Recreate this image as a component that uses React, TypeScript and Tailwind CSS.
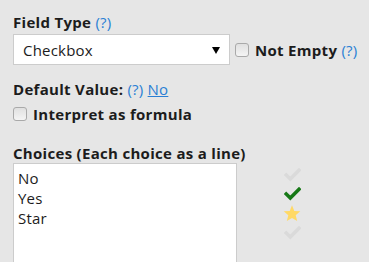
const Check = ({ color }: { color: string }) => (
  <svg width="17" height="14" viewBox="0 0 17 14" fill="none">
    <path d="M2.2 7 L6.3 11 L15 2.3" stroke={color} strokeWidth="3.6" strokeLinecap="square" strokeLinejoin="miter" />
  </svg>
)

const Star = () => (
  <svg width="18" height="17" viewBox="0 0 24 23">
    <path d="M12 0.5 L15.1 8 L23.2 8.6 L17 13.8 L19 21.8 L12 17.5 L5 21.8 L7 13.8 L0.8 8.6 L8.9 8 Z" fill="#ffd966" />
  </svg>
)

const Box = () => (
  <span className="inline-block h-[14px] w-[14px] shrink-0 rounded-[3px] border border-[#a9a9a9] bg-gradient-to-b from-[#e0e0e0] to-[#f4f4f4]" />
)

const Help = () => <span className="font-normal tracking-[0.2px] text-[#2a7fd4]">(?)</span>

export default function App() {
  const icons = ['off', 'on', 'star', 'off']
  return (
    <div
      className="h-[262px] w-[369px] overflow-hidden bg-[#e6e6e6] pl-[13px] pt-[12px] text-[15px] leading-[20px] tracking-[0.2px] text-[#1c1c1c]"
      style={{ fontFamily: '"Open Sans", sans-serif' }}
    >
      <div className="font-bold tracking-[0.3px]">
        Field Type <Help />
      </div>
      <div className="mt-[2px] flex items-center">
        <div className="flex h-[31px] w-[217px] items-center justify-between border border-[#cccccc] bg-white pl-[9px] pr-[9px]">
          <span>Checkbox</span>
          <span className="mt-[1px] h-0 w-0 border-x-[4px] border-t-[7px] border-x-transparent border-t-black" />
        </div>
        <div className="ml-[5px] flex items-center">
          <Box />
          <span className="ml-[6px] font-bold tracking-[0.3px]">
            Not Empty <Help />
          </span>
        </div>
      </div>
      <div className="mt-[14px] font-bold tracking-[0.3px]">
        Default Value: <Help />{' '}
        <span className="font-normal tracking-[0.2px] text-[#2a7fd4] underline">No</span>
      </div>
      <div className="mt-[5px] flex items-center font-bold tracking-[0.3px]">
        <Box />
        <span className="ml-[6px]">Interpret as formula</span>
      </div>
      <div className="mt-[19px] font-bold tracking-[0.3px]">Choices (Each choice as a line)</div>
      <div className="flex">
        <div className="h-[110px] w-[224px] border border-[#cccccc] bg-white px-[4px] pt-[4px]">
          <div>No</div>
          <div>Yes</div>
          <div>Star</div>
        </div>
        <div className="ml-[46px] flex flex-col pt-[2px]">
          {icons.map((k, i) => (
            <div key={i} className="flex h-[19.5px] w-[18px] items-center justify-center">
              {k === 'star' ? <Star /> : <Check color={k === 'on' ? '#167816' : '#dadada'} />}
            </div>
          ))}
        </div>
      </div>
    </div>
  )
}
